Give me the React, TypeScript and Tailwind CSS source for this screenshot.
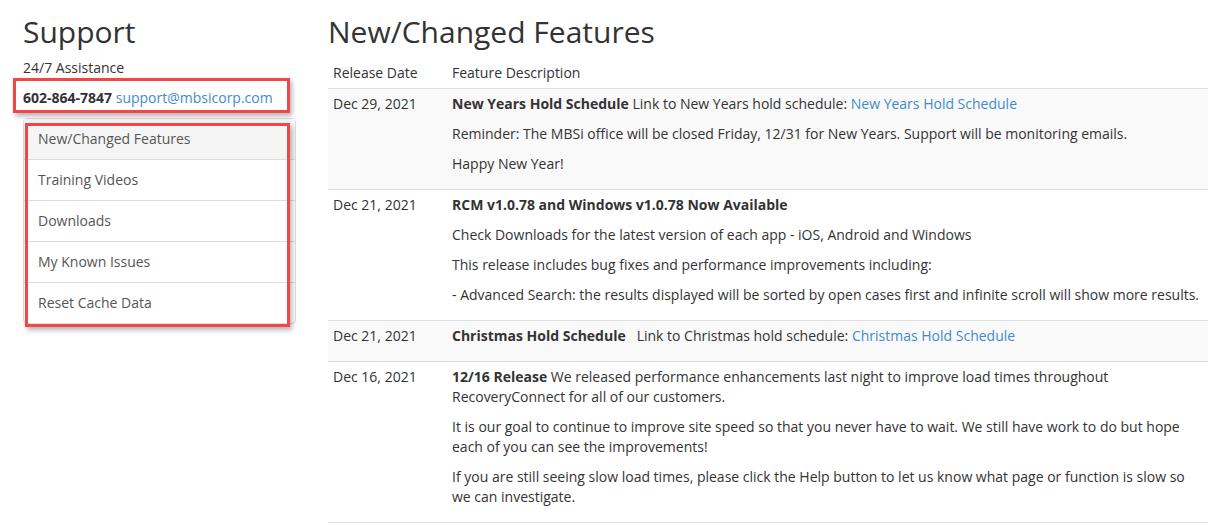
import React from "react";

const nav = ["New/Changed Features", "Training Videos", "Downloads", "My Known Issues", "Reset Cache Data"];

const A = ({ children }: { children: React.ReactNode }) => <a href="#" className="text-[#428bca]">{children}</a>;

const rows: { date: string; body: React.ReactNode[] }[] = [
  {
    date: "Dec 29, 2021",
    body: [
      <><b>New Years Hold Schedule</b> Link to New Years hold schedule: <A>New Years Hold Schedule</A></>,
      <>Reminder: The MBSi office will be closed Friday, 12/31 for New Years. Support will be monitoring emails.</>,
      <>Happy New Year!</>,
    ],
  },
  {
    date: "Dec 21, 2021",
    body: [
      <><b>RCM v1.0.78 and Windows v1.0.78 Now Available</b></>,
      <>Check Downloads for the latest version of each app - iOS, Android and Windows</>,
      <>This release includes bug fixes and performance improvements including:</>,
      <>- Advanced Search: the results displayed will be sorted by open cases first and infinite scroll will show more results.</>,
    ],
  },
  {
    date: "Dec 21, 2021",
    body: [<><b>Christmas Hold Schedule</b>&nbsp;&nbsp; Link to Christmas hold schedule: <A>Christmas Hold Schedule</A></>],
  },
  {
    date: "Dec 16, 2021",
    body: [
      <><b>12/16 Release</b> We released performance enhancements last night to improve load times throughout RecoveryConnect for all of our customers.</>,
      <>It is our goal to continue to improve site speed so that you never have to wait. We still have work to do but hope each of you can see the improvements!</>,
      <>If you are still seeing slow load times, please click the Help button to let us know what page or function is slow so we can investigate.</>,
    ],
  },
];

export default function App() {
  return (
    <div className="flex h-[525px] overflow-hidden bg-white text-[14px] leading-[20px] text-[#333]" style={{ fontFamily: '"Open Sans", "Liberation Sans", sans-serif' }}>
      {/* sidebar */}
      <div className="relative w-[296px] shrink-0 pl-[23px]">
        <h1 className="mt-[15px] mb-[10px] text-[30px] leading-[33px]">Support</h1>
        <p className="mb-[10px]">24/7 Assistance</p>
        <p className="mb-[10px]"><b>602-864-7847</b> <A>support@mbsicorp.com</A></p>
        <div className="rounded-[4px] border border-[#ddd]">
          {nav.map((n, i) => (
            <div key={n} className={`px-[14px] py-[10px] text-[#555] ${i > 0 ? "border-t border-[#ddd]" : "bg-[#f5f5f5]"}`}>{n}</div>
          ))}
        </div>
        {/* annotation boxes */}
        <div className="absolute left-[13px] top-[78px] h-[35px] w-[277px] border-[3px] border-[#f04848] shadow-[2px_3px_5px_rgba(0,0,0,0.3)]" />
        <div className="absolute left-[25px] top-[123px] h-[204px] w-[265px] border-[3px] border-[#f04848] shadow-[2px_3px_5px_rgba(0,0,0,0.3)]" />
      </div>

      {/* content */}
      <div className="ml-[32px] flex-1">
        <h1 className="mt-[15px] mb-[10px] text-[30px] leading-[33px]">New/Changed Features</h1>
        <table className="w-full border-collapse">
          <thead>
            <tr>
              <th className="w-[119px] border-b border-[#ddd] p-[5px] text-left font-normal">Release Date</th>
              <th className="border-b border-[#ddd] p-[5px] text-left font-normal">Feature Description</th>
            </tr>
          </thead>
          <tbody>
            {rows.map((r, i) => (
              <tr key={i} className={`border-b border-[#ddd] ${i % 2 === 0 ? "bg-[#f9f9f9]" : ""}`}>
                <td className="p-[5px] align-top">{r.date}</td>
                <td className="p-[5px] align-top">
                  {r.body.map((b, j) => <p key={j} className="mb-[10px]">{b}</p>)}
                </td>
              </tr>
            ))}
          </tbody>
        </table>
      </div>
    </div>
  );
}
